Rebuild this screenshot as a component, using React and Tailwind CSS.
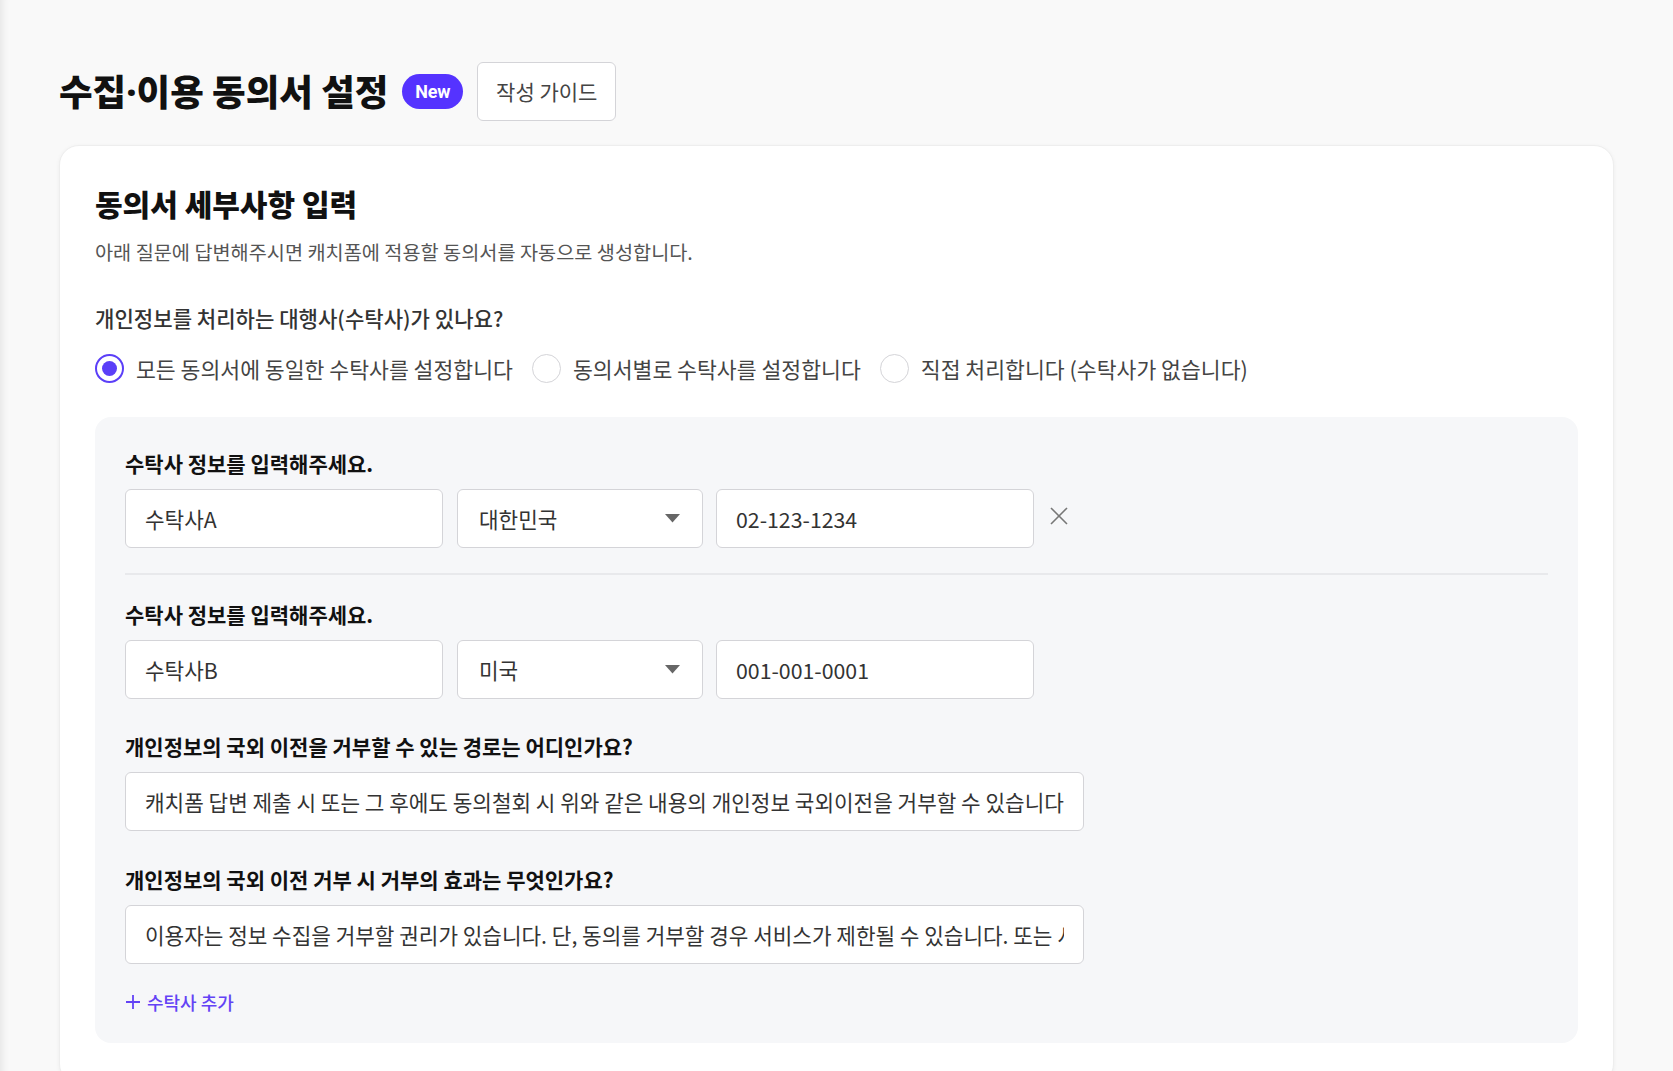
import React, { useState } from 'react';

const FONT = "font-['Noto_Sans_CJK_KR','Noto_Sans',sans-serif]";

// Radio option
const Radio = ({ checked, label, onClick }) => (
  <button type="button" onClick={onClick} className="flex items-center gap-3 mr-[19px]">
    <span
      className={
        checked
          ? 'flex items-center justify-center w-[29px] h-[29px] rounded-full border-2 border-[#5b3ff8] bg-white'
          : 'flex items-center justify-center w-[29px] h-[29px] rounded-full border-[1.5px] border-[#d4d4d8] bg-white'
      }
    >
      {checked && <span className="w-[15px] h-[15px] rounded-full bg-[#5b3ff8]" />}
    </span>
    <span className="text-[21.6px] leading-[28px] text-[#444]">{label}</span>
  </button>
);

const TextBox = ({ value, width }) => (
  <input
    readOnly
    value={value}
    className={`${width} h-[59px] px-[19px] bg-white border border-[#d4d4d8] rounded-[6px] text-[21.3px] text-[#333] outline-none ${FONT}`}
  />
);

const SelectBox = ({ value }) => (
  <div className="w-[246px] h-[59px] pl-[21px] pr-[22px] flex items-center justify-between bg-white border border-[#d4d4d8] rounded-[6px] text-[21.3px] text-[#333]">
    <span>{value}</span>
    <svg width="15" height="9" viewBox="0 0 15 9">
      <path d="M0 0 L15 0 L7.5 8.5 Z" fill="#666" />
    </svg>
  </div>
);

const TrusteeRow = ({ trustee, removable }) => (
  <div>
    <div className="text-[21px] leading-[28px] font-bold text-[#111]">수탁사 정보를 입력해주세요.</div>
    <div className="mt-[12px] flex items-center">
      <TextBox value={trustee.name} width="w-[318px]" />
      <div className="ml-[14px]">
        <SelectBox value={trustee.country} />
      </div>
      <div className="ml-[13px]">
        <TextBox value={trustee.phone} width="w-[318px]" />
      </div>
      {removable && (
        <button type="button" className="ml-[15px] -mt-[6px] text-[#777]">
          <svg width="20" height="20" viewBox="0 0 20 20" fill="none" stroke="currentColor" strokeWidth="1.6">
            <path d="M2 2 L18 18 M18 2 L2 18" />
          </svg>
        </button>
      )}
    </div>
  </div>
);

const App = () => {
  const [mode, setMode] = useState('same');

  const trustees = [
    { name: '수탁사A', country: '대한민국', phone: '02-123-1234' },
    { name: '수탁사B', country: '미국', phone: '001-001-0001' }
  ];

  return (
    <div className={`min-h-screen bg-[#f9f9f9] ${FONT} shadow-[inset_10px_0_8px_-8px_rgba(0,0,0,0.09)]`}>
      <div className="px-[59px] pt-[62px]">
        {/* Page title */}
        <div className="flex items-center">
          <h1 className="text-[36.5px] leading-[44px] font-extrabold text-[#111]">
            수집<span className="font-['Noto_Sans',sans-serif]">·</span>이용 동의서 설정
          </h1>
          <span className="ml-[14px] h-[35px] px-[13px] flex items-center rounded-full bg-[#5533ff] text-white text-[18px] font-bold font-['Liberation_Sans_Narrow','Roboto',sans-serif] tracking-[-0.3px]">
            New
          </span>
          <button
            type="button"
            className="ml-[14px] h-[59px] px-[18px] bg-white border border-[#d4d4d8] rounded-[6px] text-[21px] text-[#444]"
          >
            작성 가이드
          </button>
        </div>

        {/* Card */}
        <div className="mt-[24px] bg-white rounded-[20px] border border-[#eeeeee] shadow-[0_1px_4px_rgba(0,0,0,0.05)] px-[35px] pt-[37px] pb-[40px]">
          <h2 className="text-[30px] leading-[40px] font-extrabold text-[#111]">동의서 세부사항 입력</h2>
          <p className="mt-[15px] text-[19.7px] leading-[28px] text-[#555]">
            아래 질문에 답변해주시면 캐치폼에 적용할 동의서를 자동으로 생성합니다.
          </p>

          <div className="mt-[38px] text-[21.1px] leading-[28px] font-medium text-[#333]">
            개인정보를 처리하는 대행사(수탁사)가 있나요?
          </div>
          <div className="mt-[22px] flex items-center">
            <Radio checked={mode === 'same'} onClick={() => setMode('same')} label="모든 동의서에 동일한 수탁사를 설정합니다" />
            <Radio checked={mode === 'each'} onClick={() => setMode('each')} label="동의서별로 수탁사를 설정합니다" />
            <Radio checked={mode === 'none'} onClick={() => setMode('none')} label="직접 처리합니다 (수탁사가 없습니다)" />
          </div>

          {/* Trustee panel */}
          <div className="mt-[34px] bg-[#f6f7f9] rounded-[16px] px-[30px] pt-[32px] pb-[27px]">
            <TrusteeRow trustee={trustees[0]} removable />
            <div className="mt-[25px] h-[2px] bg-[#e8e9ec]" />
            <div className="mt-[25px]">
              <TrusteeRow trustee={trustees[1]} />
            </div>

            <div className="mt-[33px] text-[21px] leading-[28px] font-bold text-[#111]">
              개인정보의 국외 이전을 거부할 수 있는 경로는 어디인가요?
            </div>
            <div className="mt-[12px]">
              <TextBox
                value="캐치폼 답변 제출 시 또는 그 후에도 동의철회 시 위와 같은 내용의 개인정보 국외이전을 거부할 수 있습니다"
                width="w-[959px]"
              />
            </div>

            <div className="mt-[34px] text-[21px] leading-[28px] font-bold text-[#111]">
              개인정보의 국외 이전 거부 시 거부의 효과는 무엇인가요?
            </div>
            <div className="mt-[12px]">
              <TextBox
                value="이용자는 정보 수집을 거부할 권리가 있습니다. 단, 동의를 거부할 경우 서비스가 제한될 수 있습니다. 또는 서비스 이용이 불가능할 수 있습니다."
                width="w-[959px]"
              />
            </div>

            <button type="button" className="mt-[24px] flex items-center gap-[6px] text-[18px] leading-[28px] font-medium text-[#6343f5]">
              <svg width="16" height="16" viewBox="0 0 16 16" fill="none" stroke="currentColor" strokeWidth="1.8">
                <path d="M8 1 V15 M1 8 H15" />
              </svg>
              수탁사 추가
            </button>
          </div>
        </div>
      </div>
    </div>
  );
};

export default App;
